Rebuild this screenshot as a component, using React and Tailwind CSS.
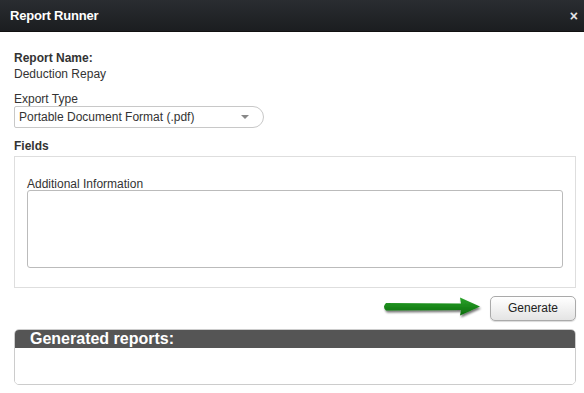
import React from "react";

export default function App() {
  return (
    <div className="w-[584px] h-[393px] bg-white overflow-hidden" style={{ fontFamily: '"Liberation Sans", Arial, sans-serif' }}>
      <div className="h-[32px] bg-gradient-to-b from-[#2a2d31] to-[#1b1d20] border-b border-[#111] flex items-center justify-between pl-[10px] pr-[6px]">
        <span className="text-white font-bold text-[13px] tracking-[-0.2px]">Report Runner</span>
        <span className="text-[#e6e6e6] font-bold text-[14px] leading-none">×</span>
      </div>
      <div className="pl-[14px] pr-[8px] pt-[19px]">
        <div className="text-[12px] font-bold text-[#333] leading-[15px]">Report Name:</div>
        <div className="text-[12px] text-[#333] leading-[15px] mt-[1px]">Deduction Repay</div>
        <div className="text-[12px] text-[#333] leading-[15px] mt-[10px]">Export Type</div>
        <div className="mt-[-1px] w-[250px] h-[22px] border border-[#c8c8c8] rounded-r-[11px] rounded-l-[2px] flex items-center justify-between pl-[4px] pr-[14px]">
          <span className="text-[12px] text-[#333]">Portable Document Format (.pdf)</span>
          <svg width="8" height="5" viewBox="0 0 8 5"><path d="M0 0 L8 0 L4 4 Z" fill="#888" /></svg>
        </div>
        <div className="text-[12px] font-bold text-[#333] leading-[15px] mt-[11px]">Fields</div>
        <div className="mt-[2px] h-[132px] border border-[#dedede] pt-[20px] px-[12px]">
          <div className="text-[12px] text-[#333] leading-[15px]">Additional Information</div>
          <div className="mt-[-2px] h-[78px] border border-[#bbb] rounded-[3px]"></div>
        </div>
        <div className="flex justify-end items-center mt-[8px] h-[24px]">
          <svg width="106" height="26" viewBox="0 0 106 26" className="mr-[3px] mt-[-1px]">
            <defs>
              <linearGradient id="ag" x1="0" y1="0" x2="0" y2="1">
                <stop offset="0" stopColor="#2aa52a" />
                <stop offset="1" stopColor="#0b6b0b" />
              </linearGradient>
              <filter id="sh" x="-10%" y="-30%" width="120%" height="170%">
                <feGaussianBlur in="SourceAlpha" stdDeviation="1.3" />
                <feOffset dx="1" dy="2" />
                <feComponentTransfer><feFuncA type="linear" slope="0.55" /></feComponentTransfer>
                <feMerge><feMergeNode /><feMergeNode in="SourceGraphic" /></feMerge>
              </filter>
            </defs>
            <g filter="url(#sh)">
              <path d="M5 8 L80 8.5 L79 2.5 L99 11.5 L79 20.5 L80 15 L5 15.5 Q1 11.75 5 8 Z" fill="url(#ag)" />
            </g>
          </svg>
          <button className="w-[86px] h-[25px] rounded-[5px] border border-[#aaa] bg-gradient-to-b from-white to-[#e4e4e4] text-[12px] text-[#222] shadow-[0_1px_1px_rgba(0,0,0,0.15)]">Generate</button>
        </div>
        <div className="mt-[9px] rounded-[5px] border border-[#ccc] overflow-hidden">
          <div className="h-[18px] bg-[#555] flex items-center pl-[15px]">
            <span className="text-white font-bold text-[16px] leading-none">Generated reports:</span>
          </div>
          <div className="h-[36px] bg-white"></div>
        </div>
      </div>
    </div>
  );
}
